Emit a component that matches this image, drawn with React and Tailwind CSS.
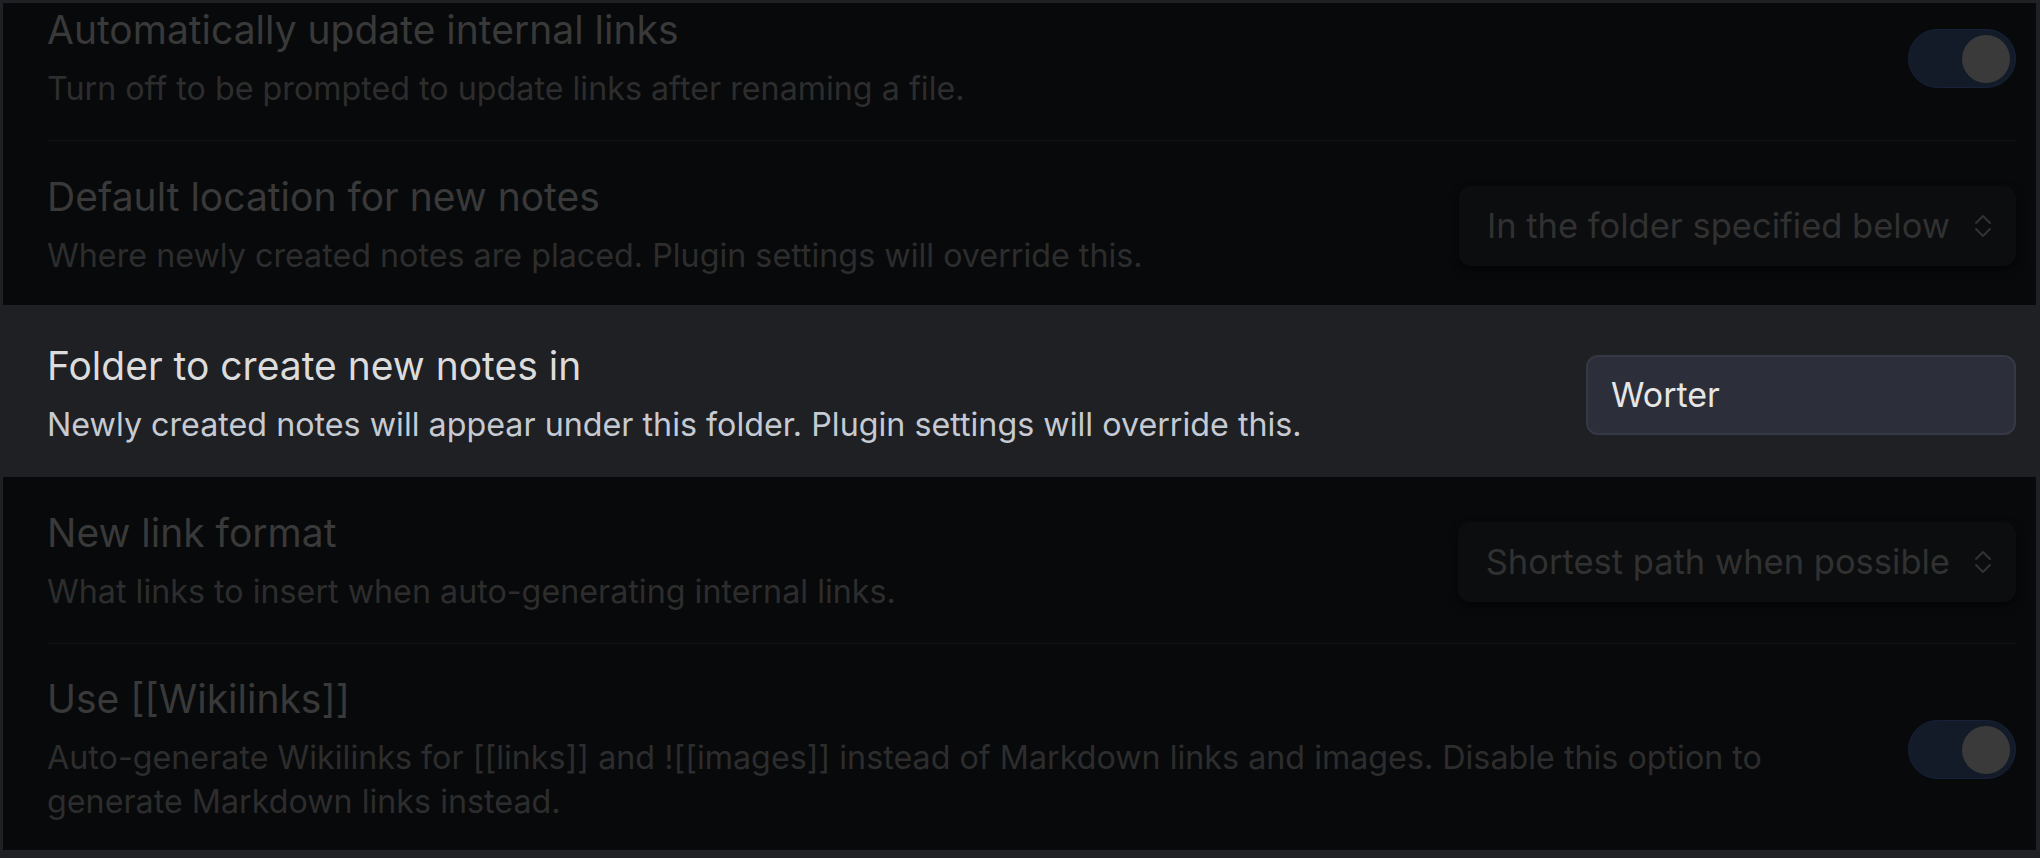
import React from 'react'

const Toggle = () => (
    <div className="flex h-[59px] w-[108px] shrink-0 items-center justify-end rounded-full border border-[#17223a] bg-[#131a28] pr-[5px]">
        <div className="h-[48px] w-[48px] rounded-full bg-[#3a3a3a]" />
    </div>
)

const Chevrons = () => (
    <svg width="22" height="26" viewBox="0 0 22 26" fill="none" stroke="#333333" strokeWidth="2" strokeLinecap="round" strokeLinejoin="round">
        <path d="M4 10 L11 3 L18 10" />
        <path d="M4 16 L11 23 L18 16" />
    </svg>
)

const Select = ({ value }) => (
    <div className="flex h-[80px] shrink-0 items-center gap-[22px] rounded-[12px] bg-[#0c0d0f] pl-[28px] pr-[22px] text-[34.5px] text-[#313131] shadow-[0_4px_8px_rgba(0,0,0,0.6)]">
        <span>{value}</span>
        <Chevrons />
    </div>
)

const Row = ({ title, children, control, bright, className }) => (
    <div className={`flex items-center justify-between gap-10 ${className}`}>
        <div className="flex flex-col">
            <div className={`text-[39px] leading-[48px] ${bright ? 'text-[#dcdcdc]' : 'text-[#393939]'}`}>{title}</div>
            <div className={`mt-[13px] text-[32.25px] leading-[44px] ${bright ? 'text-[#c6cad2]' : 'text-[#2d2d2d]'}`}>{children}</div>
        </div>
        {control}
    </div>
)

export default function App() {
    return (
        <div className="flex h-[858px] w-[2040px] flex-col overflow-hidden bg-[#1f2125] pt-[3px] pb-[8px] font-['Inter',sans-serif]">
            {/* dimmed part above */}
            <div className="ml-[3px] mr-[4px] bg-[#08090b] pl-[44px] pr-[20px]">
                <Row title="Automatically update internal links" control={<Toggle />} className="pt-[3px] pb-[29px]">
                    Turn off to be prompted to update links after renaming a file.
                </Row>
                <Row title="Default location for new notes" control={<Select value="In the folder specified below" />} className="border-t border-[#131417] pt-[32px] pb-[27px]">
                    Where newly created notes are placed. Plugin settings will override this.
                </Row>
            </div>

            {/* highlighted setting */}
            <div className="bg-[#1e2024] pl-[47px] pr-[24px]">
                <Row
                    title="Folder to create new notes in"
                    bright
                    className="pt-[37px] pb-[30px]"
                    control={
                        <input
                            readOnly
                            value="Worter"
                            className="h-[80px] w-[430px] shrink-0 rounded-[12px] border-2 border-[#353845] bg-[#2c2f3a] pl-[23px] text-[34px] text-[#e6e6e6] outline-none"
                        />
                    }
                >
                    Newly created notes will appear under this folder. Plugin settings will override this.
                </Row>
            </div>

            {/* dimmed part below */}
            <div className="ml-[3px] mr-[4px] flex-1 bg-[#08090b] pl-[44px] pr-[20px]">
                <Row title="New link format" control={<Select value="Shortest path when possible" />} className="pt-[32px] pb-[29px]">
                    What links to insert when auto-generating internal links.
                </Row>
                <Row title="Use [[Wikilinks]]" control={<Toggle />} className="border-t border-[#131417] pt-[31px]">
                    Auto-generate Wikilinks for [[links]] and ![[images]] instead of Markdown links and images. Disable this option to
                    <br />
                    generate Markdown links instead.
                </Row>
            </div>
        </div>
    )
}
